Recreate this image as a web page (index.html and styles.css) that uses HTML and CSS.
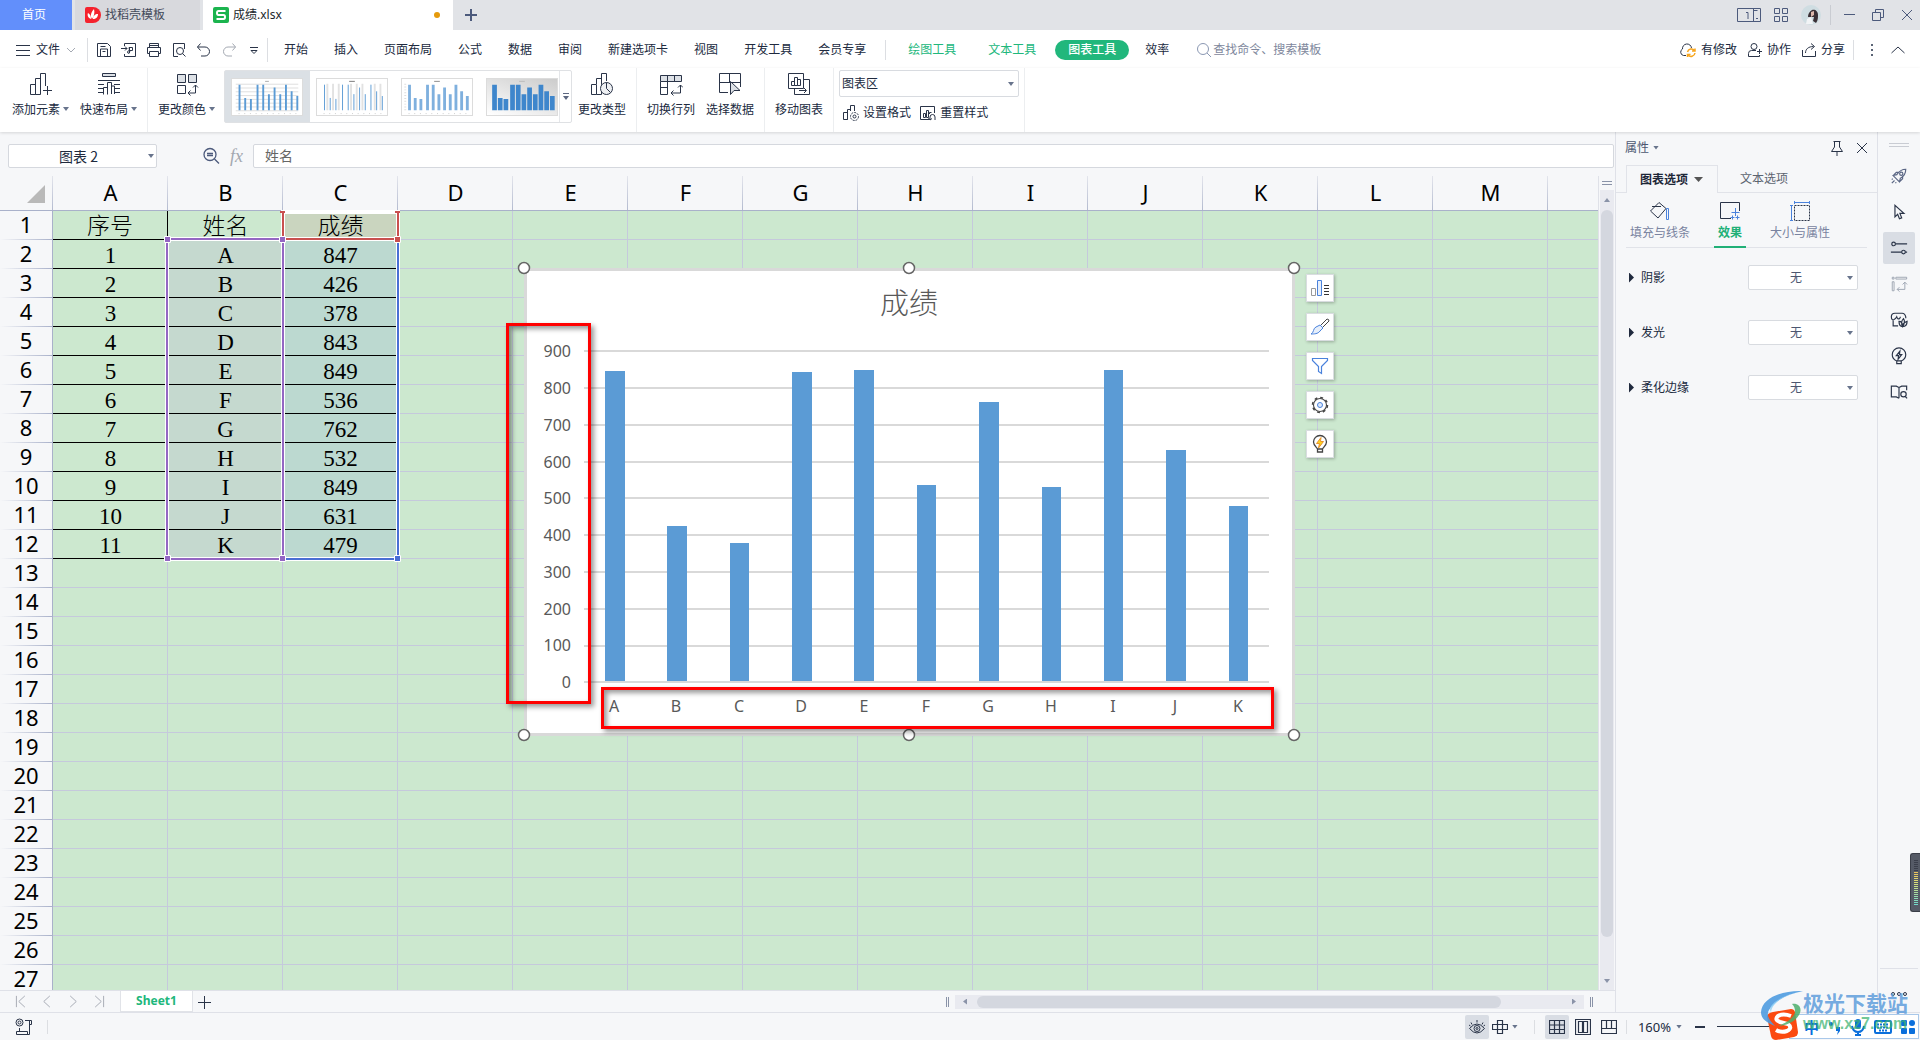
FILE: index.html
```html
<!DOCTYPE html>
<html lang="zh-CN">
<head>
<meta charset="utf-8">
<title>成绩.xlsx</title>
<link rel="stylesheet" href="styles.css">
</head>
<body>
<svg class="defs" aria-hidden="true">
  <symbol id="bars" viewBox="0 0 72 38">
    <path d="M7 33V6M13 33V20M19 33V21M26 33V6M32 33V6M38 33V16M44 33V9M50 33V16M56 33V6M62 33V13M68 33V18"/>
  </symbol>
</svg>

<header class="titlebar">
  <button class="home-tab">首页</button>
  <button class="doc-tab">
    <svg class="i16" viewBox="0 0 16 16"><path fill="#f5222d" d="M2 0h6a8 8 0 010 16H2a2 2 0 01-2-2V2a2 2 0 012-2z"/><path fill="#fff" d="M7 12C5 9 6 5 9 2c1 4 0 7-2 10zM6 12C3 11 2 8 3 6c2 1 3 3 3 6zM8 12c0-3 2-5 5-5 0 3-2 5-5 5z"/></svg>
    找稻壳模板
  </button>
  <button class="doc-tab active">
    <svg class="i16" viewBox="0 0 16 16"><rect width="16" height="16" rx="2" fill="#1bb44e"/><path fill="none" stroke="#fff" stroke-width="2" d="M12.500 4H5.500Q4 4 4 6t1.500 2h5Q12 8 12 10t-1.500 2H3.500"/></svg>
    <span class="doc-name">成绩.xlsx</span>
    <span class="dot"></span>
  </button>
  <button class="add-tab" aria-label="新建"><svg class="i16" viewBox="0 0 16 16"><path stroke="#4c5a7c" stroke-width="2" d="M8 2v12M2 8h12"/></svg></button>
  <div class="window-tools">
    <svg width="24" height="16" viewBox="0 0 24 16"><path class="ln" d="M.5 1.500h23v13h-23zM9 5.500h2V12M16.500 1.500v13M16.500 3.500h4M19 11.500h2"/></svg>
    <svg class="i16" viewBox="0 0 16 16"><path class="ln" d="M1.500 1.500h5v5h-5zM9.500 1.500h5v5h-5zM1.500 9.500h5v5h-5zM9.500 9.500h5v5h-5z"/></svg>
    <svg width="20" height="20" viewBox="0 0 20 20"><circle cx="10" cy="10" r="10" fill="#cfdde2"/><path fill="#3a3036" d="M11 5c3-1 6 1 6 5 0 3 0 5-2 8l-3-2 1-4-6 0c0-3 1-5 4-7z"/><path fill="#dcb7ab" d="M10 7l3-1 0 4-3 2z"/><path fill="#f2f4f6" d="M5 19l1-5 4-2 2 7z"/></svg>
    <span class="vsep"></span>
    <svg class="i16" viewBox="0 0 16 16"><path class="ln" d="M3 7.500h11"/></svg>
    <svg class="i16" viewBox="0 0 16 16"><path class="ln" d="M2.500 5.500h8v8h-8zM5.500 5V2.500h8v8H11"/></svg>
    <svg class="i16" viewBox="0 0 16 16"><path class="ln" d="M3 3l10 10M13 3L3 13"/></svg>
  </div>
</header>

<nav class="menubar">
  <button class="file-menu">
    <svg width="14" height="14" viewBox="0 0 14 14"><path class="dk" d="M0 2.500h14M0 7.500h14M0 12.500h14"/></svg>
    文件
    <svg class="chev" width="10" height="10" viewBox="0 0 10 10"><path class="gy" d="M1 3l4 4 4-4"/></svg>
  </button>
  <div class="quick">
    <svg class="i16" viewBox="0 0 16 16"><path class="dk" d="M1.500 1.500h10l3 3v10h-13zM4.500 14v-7h7v7M4.500 4.500h5M6.500 9.500h3"/></svg>
    <svg class="i16" viewBox="0 0 16 16"><path class="dk" d="M3.500 4V1.500h11v13h-11V12M0 6.500h6M4 4.500l2 2-2 2M8 5.500h3.500v3H8.500zM8.500 5v6q-2 1-2-1t3-1"/></svg>
    <svg class="i16" viewBox="0 0 16 16"><path class="dk" d="M3.500 5V1.500h9V5M3 11.500H1.500v-6h13v6H13M3.500 9.500h9v5h-9zM3.500 3.500h9"/></svg>
    <svg class="i16" viewBox="0 0 16 16"><path class="dk" d="M7 14.500H2.500v-13h11V7"/><circle class="dk" cx="9" cy="9" r="3.500"/><path class="dk" d="M11.500 11.500l3 3"/></svg>
    <svg class="i16" viewBox="0 0 16 16"><path class="dk" d="M4.500 1.500l-3 3.500 3 3.500M1.500 5H9a4.500 4.500 0 010 9H5"/></svg>
    <svg class="i16" viewBox="0 0 16 16"><path class="gy" d="M11.500 1.500l3 3.500-3 3.500M14.500 5H7a4.500 4.500 0 000 9h4"/></svg>
    <svg class="i16" viewBox="0 0 16 16"><path class="dk" d="M4 5.500h8M5 8.500l3 3 3-3z"/></svg>
  </div>
  <div class="tabs">
    <a href="#">开始</a><a href="#">插入</a><a href="#">页面布局</a><a href="#">公式</a><a href="#">数据</a><a href="#">审阅</a><a href="#">新建选项卡</a><a href="#">视图</a><a href="#">开发工具</a><a href="#">会员专享</a>
  </div>
  <div class="context-tabs">
    <a href="#" class="green">绘图工具</a><a href="#" class="green">文本工具</a><a href="#" class="pill">图表工具</a><a href="#" class="plain">效率</a>
  </div>
  <label class="search"><svg class="i16" viewBox="0 0 16 16"><circle class="bl" cx="7" cy="7" r="5.500"/><path class="bl" d="M11 11l4 4"/></svg><input type="text" placeholder="查找命令、搜索模板"></label>
  <div class="share">
    <button><svg width="18" height="16" viewBox="0 0 18 16"><path class="dk" d="M7 13.500H4.500a3.500 3.500 0 01-1-6.500 4.500 4.500 0 019-1"/><path fill="none" stroke="#f7a51c" stroke-width="1.500" d="M8.500 10a4 4 0 017-1.500M16 6.500v2.500h-3M16 11a4 4 0 01-7 2M8.500 15v-2.500h3"/></svg>有修改</button>
    <button><svg class="i16" viewBox="0 0 16 16"><circle class="dk" cx="7" cy="4.500" r="3"/><path class="dk" d="M9 8.500H4.500a3 3 0 00-3 3v3h11V13M10 9.500h5M12.500 7v5"/></svg>协作</button>
    <button><svg class="i16" viewBox="0 0 16 16"><path class="dk" d="M1.500 8v6.500h13V9M4.500 11c0-4 3-6.500 8-6.500M10 1.500l3.500 3-3.500 3"/></svg>分享</button>
    <span class="vsep"></span>
    <svg class="i16" viewBox="0 0 16 16"><path fill="#5a6475" d="M7 2h2v2H7zM7 7h2v2H7zM7 12h2v2H7z"/></svg>
    <svg class="i16" viewBox="0 0 16 16"><path class="dk" d="M1.500 11L8 5l6.500 6"/></svg>
  </div>
</nav>

<section class="ribbon">
  <div class="group">
    <button class="rb"><svg viewBox="0 0 24 24"><path class="dk" d="M1.500 22.500v-10h5v10zM6.500 22.500v-16h5v16zM11.500 14V1.500h5V14M18.500 14v9M14 18.500h9"/></svg><span class="more">添加元素</span></button>
    <button class="rb"><svg viewBox="0 0 24 24"><path class="dk" fill="#dde1e6" d="M5.500 1.500h13v3h-13z"/><path class="dk" d="M1 8.500h22M1 12.500h6M1 16.500h6M1 20.500h6M17 12.500h6M17 16.500h6M17 20.500h6M6.500 22.500v-7h4v7M10.500 22V10.500h4V22M14.500 22v-8h3v8"/></svg><span class="more">快速布局</span></button>
  </div>
  <div class="group">
    <button class="rb"><svg viewBox="0 0 24 24"><path class="dk" fill="#dde1e6" d="M2.500 2.500h8v8h-8zM13.500 2.500h8v8h-8z"/><path class="dk" d="M2.500 13.500h8v8h-8zM20.500 13v8H13M18 15.500l2.500-2.500 2.500 2.500M15.500 18.500L13 21l2.500 2.500"/></svg><span class="more">更改颜色</span></button>
  </div>
  <div class="gallery">
    <button class="style selected" aria-label="样式 1"><svg viewBox="0 0 72 38"><path stroke="#ddd" d="M3 5.500h66M3 9.500h66M3 13.500h66M3 17.500h66M3 21.500h66M3 25.500h66M3 29.500h66M3 33.500h66"/><path stroke="#aaa" d="M34 2.500h4"/><use href="#bars" class="b1"/><path stroke="#ccc" stroke-dasharray="1 5" d="M6 36.500h64"/></svg></button>
    <button class="style" aria-label="样式 2"><svg viewBox="0 0 72 38"><path stroke="#e2e2e2" stroke-width="2" d="M10 33V5M16 33V5M22 33V5M35 33V5M41 33V5M47 33V5M60 33V5M66 33V5"/><path stroke="#777" d="M33 2.500h6"/><use href="#bars" class="b2"/><path stroke="#ccc" stroke-dasharray="1 5" d="M6 36.500h64"/></svg></button>
    <button class="style" aria-label="样式 3"><svg viewBox="0 0 72 38"><path stroke="#888" d="M33 2.500h6"/><path stroke="#ddd" stroke-width="2" stroke-dasharray="1 2" d="M2.500 5v28"/><use href="#bars" class="b3"/><path stroke="#ccc" stroke-dasharray="1 5" d="M6 36.500h64"/></svg></button>
    <button class="style dark" aria-label="样式 4"><svg viewBox="0 0 72 38"><path stroke="#bbb" d="M33 2.500h6"/><use href="#bars" class="b4"/></svg></button>
    <button class="gallery-more" aria-label="更多样式"><svg width="8" height="8" viewBox="0 0 8 8"><path stroke="#5c6780" d="M1 .5h6"/><path fill="#5c6780" d="M1 3h6L4 7z"/></svg></button>
  </div>
  <div class="group tight">
    <button class="rb"><svg viewBox="0 0 24 24"><path class="dk" d="M1.500 22.500v-10h5v10zM6.500 12V6.500h5V22.500h-5M11.500 9V1.500h5V9"/><circle class="dk" fill="#eef0f3" cx="16.500" cy="16.500" r="6"/><path class="dk" d="M16.500 10.500v6l4 4"/></svg>更改类型</button>
  </div>
  <div class="group">
    <button class="rb"><svg viewBox="0 0 24 24"><path fill="#dde1e6" d="M2 3h20v6H2z"/><path class="dk" d="M1.500 3.500h21v6h-21zM1.500 9.500v13h7v-13M8.500 3.500v6M15.500 3.500v6M1.500 15.500h7M21.500 13v8H12M19 15.500l2.500-2.500 2.500 2.500M14.500 18.500L12 21l2.500 2.500"/></svg>切换行列</button>
    <button class="rb"><svg viewBox="0 0 24 24"><path class="dk" d="M10 20.500H1.500v-19h21V15M1.500 10.500h21M11.500 1.500v9"/><path class="dk" fill="#dde1e6" d="M12.500 9.500v13l3.500-4h6z"/></svg>选择数据</button>
  </div>
  <div class="group">
    <button class="rb"><svg viewBox="0 0 24 24"><path class="dk" d="M1.500 1.500h15v15h-15zM4.500 13.500v-4h3v4zM7.500 13.500v-8h3v8zM10.500 13.500v-6h3v6zM16.500 7.500h6v15h-15v-6M12 18.500h7M17 16l2.500 2.500L17 21"/></svg>移动图表</button>
  </div>
  <div class="group area">
    <select aria-label="图表元素"><option>图表区</option></select>
    <div class="area-buttons">
      <button><svg class="i16" viewBox="0 0 16 16"><path class="dk" d="M.5 14.500v-7h4v7zM4.500 14.500v-10h3M7.500 6V.5h4V6"/><circle class="dk" stroke-dasharray="2 1" cx="11.500" cy="11.500" r="4"/><circle class="dk" cx="11.500" cy="11.500" r="1.500"/></svg>设置格式</button>
      <button><svg class="i16" viewBox="0 0 16 16"><path class="dk" d="M9 14.500H.5v-13h14V8M3.500 12.500v-4h2v4zM6.500 12.500v-7h2v7zM9.500 9V7.500h2M10 15v-3a2.500 2.500 0 015 0v3M8.500 13l1.500 2 2-1.500"/></svg>重置样式</button>
    </div>
  </div>
</section>

<main class="main">
  <section class="workspace">
    <div class="formula-bar">
      <div class="name-box"><input type="text" value="图表 2" aria-label="名称框"><span class="caret"></span></div>
      <svg class="zoom-ic" width="18" height="18" viewBox="0 0 18 18"><circle class="ln2" cx="8" cy="7.500" r="6"/><path class="ln2" d="M5 6.500h6M5 8.500h6M12.500 12l4.500 4.500"/></svg>
      <span class="fx">fx</span>
      <input class="formula" type="text" value="姓名" aria-label="编辑栏">
    </div>
    <div class="sheet-area">
      <div class="pane">
        <table class="sheet">
          <thead><tr><th class="corner"><span></span></th><th>A</th><th>B</th><th>C</th><th>D</th><th>E</th><th>F</th><th>G</th><th>H</th><th>I</th><th>J</th><th>K</th><th>L</th><th>M</th><th></th></tr></thead>
          <tbody>
            <tr class="data head"><th>1</th><td>序号</td><td>姓名</td><td>成绩</td><td colspan="11" class="rest"></td></tr>
            <tr class="data"><th>2</th><td>1</td><td>A</td><td>847</td><td colspan="11" class="rest"></td></tr>
            <tr class="data"><th>3</th><td>2</td><td>B</td><td>426</td><td colspan="11" class="rest"></td></tr>
            <tr class="data"><th>4</th><td>3</td><td>C</td><td>378</td><td colspan="11" class="rest"></td></tr>
            <tr class="data"><th>5</th><td>4</td><td>D</td><td>843</td><td colspan="11" class="rest"></td></tr>
            <tr class="data"><th>6</th><td>5</td><td>E</td><td>849</td><td colspan="11" class="rest"></td></tr>
            <tr class="data"><th>7</th><td>6</td><td>F</td><td>536</td><td colspan="11" class="rest"></td></tr>
            <tr class="data"><th>8</th><td>7</td><td>G</td><td>762</td><td colspan="11" class="rest"></td></tr>
            <tr class="data"><th>9</th><td>8</td><td>H</td><td>532</td><td colspan="11" class="rest"></td></tr>
            <tr class="data"><th>10</th><td>9</td><td>I</td><td>849</td><td colspan="11" class="rest"></td></tr>
            <tr class="data"><th>11</th><td>10</td><td>J</td><td>631</td><td colspan="11" class="rest"></td></tr>
            <tr class="data"><th>12</th><td>11</td><td>K</td><td>479</td><td colspan="11" class="rest"></td></tr>
            <tr><th>13</th><td colspan="14" class="rest"></td></tr>
            <tr><th>14</th><td colspan="14" class="rest"></td></tr>
            <tr><th>15</th><td colspan="14" class="rest"></td></tr>
            <tr><th>16</th><td colspan="14" class="rest"></td></tr>
            <tr><th>17</th><td colspan="14" class="rest"></td></tr>
            <tr><th>18</th><td colspan="14" class="rest"></td></tr>
            <tr><th>19</th><td colspan="14" class="rest"></td></tr>
            <tr><th>20</th><td colspan="14" class="rest"></td></tr>
            <tr><th>21</th><td colspan="14" class="rest"></td></tr>
            <tr><th>22</th><td colspan="14" class="rest"></td></tr>
            <tr><th>23</th><td colspan="14" class="rest"></td></tr>
            <tr><th>24</th><td colspan="14" class="rest"></td></tr>
            <tr><th>25</th><td colspan="14" class="rest"></td></tr>
            <tr><th>26</th><td colspan="14" class="rest"></td></tr>
            <tr><th>27</th><td colspan="14" class="rest"></td></tr>
          </tbody>
        </table>

        <!-- Source ranges of the selected chart -->
        <svg class="ranges" width="404" height="400" viewBox="0 176 404 400" aria-hidden="true">
          <g fill="none" stroke="#fff" stroke-width="4"><path d="M398 240v319H283M283 212h115v27H283z"/><path d="M167 239h116v320H167z"/></g>
          <g fill="none" stroke-width="2"><path stroke="#4a6fd4" d="M398 240v319H283"/><path stroke="#c9504f" d="M283 213v26h115v-26"/><path stroke="#9467c3" d="M283 239H167v320h116V240"/></g>
          <g stroke="#fff"><path fill="#9467c3" d="M164.500 236.500h6v6h-6zM279.500 236.500h6v6h-6zM164.500 555.500h6v6h-6zM279.500 555.500h6v6h-6z"/><path fill="#4a6fd4" d="M394.500 555.500h6v6h-6z"/><path fill="#c9504f" d="M394.500 236.500h6v6h-6z"/></g>
          <path fill="#c9504f" d="M280 211h5v2h-5zM395 211h5v2h-5z"/>
        </svg>

        <svg class="chart" width="790" height="490" viewBox="515 258 790 490" role="img" aria-label="成绩">
          <rect x="524" y="268" width="771" height="468" fill="#d9d9d9"/>
          <rect x="527" y="271" width="765" height="462" fill="#fff"/>
          <text class="chart-title" x="909" y="314">成绩</text>
          <path stroke="#d9d9d9" stroke-width="2" d="M584 351h685M584 388h685M584 425h685M584 462h685M584 498h685M584 535h685M584 572h685M584 609h685M584 646h685M584 682h685"/>
          <path fill="#5b9bd5" d="M605 371h20v310h-20zM667 526h20v155h-20zM730 543h19v138h-19zM792 372h20v309h-20zM854 370h20v311h-20zM917 485h19v196h-19zM979 402h20v279h-20zM1042 487h19v194h-19zM1104 370h19v311h-19zM1166 450h20v231h-20zM1229 506h19v175h-19z"/>
          <g class="axis-y"><text x="571" y="357">900</text><text x="571" y="394">800</text><text x="571" y="431">700</text><text x="571" y="468">600</text><text x="571" y="504">500</text><text x="571" y="541">400</text><text x="571" y="578">300</text><text x="571" y="615">200</text><text x="571" y="651">100</text><text x="571" y="688">0</text></g>
          <g class="axis-x"><text x="614" y="712">A</text><text x="676" y="712">B</text><text x="739" y="712">C</text><text x="801" y="712">D</text><text x="864" y="712">E</text><text x="926" y="712">F</text><text x="988" y="712">G</text><text x="1051" y="712">H</text><text x="1113" y="712">I</text><text x="1175" y="712">J</text><text x="1238" y="712">K</text></g>
          <g fill="#fff" stroke="#666" stroke-width="1.500"><circle cx="524" cy="268" r="5.500"/><circle cx="909" cy="268" r="5.500"/><circle cx="1294" cy="268" r="5.500"/><circle cx="524" cy="735" r="5.500"/><circle cx="909" cy="735" r="5.500"/><circle cx="1294" cy="735" r="5.500"/></g>
        </svg>
        <div class="mark mark-y"></div>
        <div class="mark mark-x"></div>

        <div class="chart-tools">
          <button aria-label="图表元素"><svg viewBox="0 0 20 20"><path fill="none" stroke="#999" d="M1.500 10.500h4v7h-4z"/><path fill="#e6effb" stroke="#4a82dc" d="M7.500 2.500h4v15h-4z"/><path stroke="#333" d="M14 7.500h5M14 10.500h5M14 13.500h5M14 16.500h5"/></svg></button>
          <button aria-label="图表样式"><svg viewBox="0 0 20 20"><path fill="none" stroke="#444" d="M11 8l6-6q2 0 2 2l-7 7"/><path fill="#e6effb" stroke="#4a82dc" d="M10 8l3 3-3 3c-2 3-6 3-9 3 3-1 2-6 5-7z"/></svg></button>
          <button aria-label="图表筛选器"><svg viewBox="0 0 20 20"><path fill="none" stroke="#4a82dc" stroke-width="1.200" d="M2.500 2.500h15v2l-6 6v7l-3-2v-5l-6-6z"/></svg></button>
          <button aria-label="设置图表区域格式"><svg viewBox="0 0 20 20"><circle cx="10" cy="10" r="6.500" fill="none" stroke="#444" stroke-width="1.100"/><circle cx="10" cy="10" r="7.500" fill="none" stroke="#444" stroke-width="1.500" stroke-dasharray="2.900 2.990"/><circle cx="10" cy="10" r="2.500" fill="#dfeafa" stroke="#4a82dc"/></svg></button>
          <button aria-label="智能图表"><svg viewBox="0 0 20 20"><path fill="none" stroke="#444" stroke-width="1.300" d="M7.500 15c0-1-4-3-4-7a6.500 6.500 0 0113 0c0 4-4 6-4 7zM7.500 15v3h5v-3"/><path fill="#ffd41f" stroke="#e8942a" d="M11 3.500L6.500 9.500h3l-1 4.500 5-6.500h-3z"/></svg></button>
        </div>
      </div>
      <div class="vscroll">
        <span class="split"></span>
        <div class="vtrack"><span class="arrow up"></span><span class="vthumb"></span><span class="arrow down"></span></div>
      </div>
    </div>
    <div class="sheet-bar">
      <div class="sheet-nav">
        <svg class="i16" viewBox="0 0 16 16"><path class="gy" d="M1.500 2v12M10.500 2L4 8l6.500 6"/></svg>
        <svg class="i16" viewBox="0 0 16 16"><path class="gy" d="M10.500 2L4 8l6.500 6"/></svg>
        <svg class="i16" viewBox="0 0 16 16"><path class="gy" d="M5.500 2L12 8l-6.500 6"/></svg>
        <svg class="i16" viewBox="0 0 16 16"><path class="gy" d="M14.500 2v12M5.500 2L12 8l-6.500 6"/></svg>
      </div>
      <button class="sheet-tab">Sheet1</button>
      <button class="add-sheet" aria-label="新建工作表"><svg class="i16" viewBox="0 0 16 16"><path class="dk" d="M8.500 2v13M2 8.500h13"/></svg></button>
      <div class="hscroll">
        <span class="vsplit"></span>
        <div class="htrack"><span class="arrow left"></span><span class="hthumb"></span><span class="arrow right"></span></div>
        <span class="vsplit"></span>
      </div>
    </div>
  </section>

  <aside class="props">
    <div class="props-head"><button>属性<span class="caret"></span></button><span class="grow"></span>
      <svg class="i16" viewBox="0 0 16 16"><path class="dk" d="M4.500 1.500h7M5.500 1.500V7L2.500 11.500h11L10.500 7V1.500M8 11.500V16"/></svg>
      <svg class="i16" viewBox="0 0 16 16"><path class="dk" d="M3 3l10 10M13 3L3 13"/></svg>
    </div>
    <div class="props-tabs"><button class="on">图表选项<span class="caret big"></span></button><button>文本选项</button></div>
    <div class="props-kinds">
      <button><svg width="22" height="22" viewBox="0 0 22 22"><path class="dk" d="M1.500 11L10 2.500l7 6-8 9.500zM3 6.500h9"/><path stroke="#4a82dc" fill="none" d="M17.500 8.500h2v11h-2z"/></svg>填充与线条</button>
      <button class="on"><svg width="22" height="22" viewBox="0 0 22 22"><path class="dk" d="M12 18.500H1.500v-16h19V11"/><path stroke="#4a82dc" d="M16.500 8v8M12.500 12.500h8M13.500 15.500v4M11.500 17.500h4M18.500 15.500v4M16.500 17.500h4"/></svg>效果</button>
      <button><svg width="22" height="22" viewBox="0 0 22 22"><path class="dk" stroke-dasharray="2 1" d="M5.500 5.500h15v15h-15z"/><path stroke="#4a82dc" d="M5 2.500h16M5.500 1v3M20.500 1v3M2.500 5v16M1 5.500h3M1 20.500h3"/></svg>大小与属性</button>
    </div>
    <div class="prop"><label for="p1">阴影</label><select id="p1"><option>无</option></select></div>
    <div class="prop"><label for="p2">发光</label><select id="p2"><option>无</option></select></div>
    <div class="prop"><label for="p3">柔化边缘</label><select id="p3"><option>无</option></select></div>
  </aside>

  <aside class="rail">
    <span class="grip"></span>
    <button aria-label="快速工具"><svg viewBox="0 0 20 20"><path class="sl" d="M17.500 2.500c-5 0-8 3-10 6l-4 1 7 7 1-4c4-2 6-5 6-10zM3 13l-1 1M5 15l-3 3M7 17l-1 1M3.500 9.500L7 6h3M10.500 16.500L14 13v-3"/><circle class="sl" cx="12.500" cy="7.500" r="1.800"/></svg></button>
    <button aria-label="选择"><svg viewBox="0 0 20 20"><path class="dk w" d="M5.500 2.500v13l3-3 2 5 2.500-1-2-5h4.500z"/></svg></button>
    <button aria-label="属性" class="on"><svg viewBox="0 0 20 20"><path class="dk w" d="M6 5.500h13M1 14.500h12M17 14.500h2"/><circle class="dk w" cx="4" cy="5.500" r="2"/><circle class="dk w" cx="15" cy="14.500" r="2"/></svg></button>
    <button aria-label="数据透视表"><svg viewBox="0 0 20 20"><path fill="none" stroke="#98a0ae" d="M2.500 2.500h2v2h-2zM6.500 2.500h12v2h-12zM2.500 7.500h2v10h-2zM16.500 8v8H8M14 10.500L16.500 8l2.500 2.500M10.500 13.500L8 16l2.500 2.500"/></svg></button>
    <button aria-label="素材"><svg viewBox="0 0 20 20"><path class="dk w" d="M9 16.500H3.500v-6M17.500 8V6.500q-1-4-4-4h-8q-4 0-4 4t3 3q2-1 3-3 1 3 3 2 1-1 1-2"/><path class="dk w" d="M14 17.500c-3 0-4-3-4-6 2 0 4 2 4 6zM14 17.500c-2-4-1-7 1-9 2 3 1 6-1 9zM14 17.500c0-4 2-5 5-6 0 3-1 6-5 6z"/></svg></button>
    <button aria-label="灵感"><svg viewBox="0 0 20 20"><path class="dk w" d="M7.500 15.500c-2-1-5-3-5-7a7.500 7.500 0 0115 0c0 4-3 6-5 7v3h-5zM7.500 15.500h5M11 4.500L7 9.500h2.500l-.5 4L13 8.500h-2.500z"/></svg></button>
    <button aria-label="帮助"><svg viewBox="0 0 20 20"><path class="dk w" d="M10 17l-3-1.500H1.500v-12H7l3 1.500V17M10 5l3-1.500h5.500V8"/><circle class="dk w" cx="15" cy="12.500" r="3"/><path class="dk w" d="M17 15l2 2"/></svg></button>
    <span class="grow"></span>
    <span class="rail-end"><svg width="18" height="6" viewBox="0 0 18 6"><circle class="dk" cx="3" cy="3" r="1.500"/><circle class="dk" cx="9" cy="3" r="1.500"/><circle class="dk" cx="15" cy="3" r="1.500"/></svg></span>
  </aside>
</main>

<footer class="statusbar">
  <svg class="macro" width="18" height="18" viewBox="0 0 18 18"><circle class="dk" cx="4.500" cy="4.500" r="3.500"/><circle class="dk" cx="4.500" cy="4.500" r="1.500"/><path class="dk" d="M10 2.500h6.500v4h-2V2.500M14.500 6v10.500h-13v-3h11v3M4.500 13v-3"/></svg>
  <span class="vsep"></span>
  <span class="grow"></span>
  <button class="st on" aria-label="护眼模式"><svg width="18" height="18" viewBox="0 0 18 18"><path class="dk" d="M1.500 10.500q7.500-9 15 0-7.500 9-15 0zM3 4.500l1 2M9 2v2.500M15 4.500l-1 2M1 7l1.500 1M17 7l-1.500 1"/><circle class="dk" cx="9" cy="10.500" r="3"/><circle class="dk" cx="9" cy="10.500" r="1"/></svg></button>
  <button class="st cross" aria-label="阅读模式"><svg width="16" height="16" viewBox="0 0 16 16"><path class="dk t" d="M5.500 1.500h5v13h-5zM.5 5.500h15v5H.5z"/></svg><span class="caret"></span></button>
  <span class="vsep"></span>
  <button class="st on" aria-label="普通视图"><svg width="16" height="16" viewBox="0 0 16 16"><path class="dk t" d="M.5 1.500h15v13H.5zM.5 6h15M.5 10.500h15M5.500 1.500v13M10.500 1.500v13"/></svg></button>
  <button class="st" aria-label="分页预览"><svg width="16" height="16" viewBox="0 0 16 16"><path class="dk t" d="M.5.5h15v15H.5zM3.500 2.500h4v11h-4zM8.500 2.500h4v11h-4z"/></svg></button>
  <button class="st" aria-label="页面布局"><svg width="16" height="16" viewBox="0 0 16 16"><path class="dk t" d="M.5 1.500h15v13H.5zM5.500 1.500v8M10.500 1.500v8M.5 9.500h15"/></svg></button>
  <span class="vsep"></span>
  <button class="zoom">160%<span class="caret"></span></button>
  <span class="minus"></span>
  <input class="slider" type="range" min="10" max="400" value="160" aria-label="缩放">
</footer>

<div class="meter" aria-hidden="true"></div>

<div class="overlay-brand">
  <div class="ime">
    <span class="ime-cn">中</span>
    <svg width="14" height="18" viewBox="0 0 14 18"><circle cx="3" cy="6" r="2" fill="#0a6fdc"/><path fill="#0a6fdc" d="M8 9h4v4l-3 4 1-4H8z"/></svg>
    <svg width="14" height="18" viewBox="0 0 14 18"><rect x="4" y="1" width="6" height="10" rx="3" fill="#0a6fdc"/><path fill="none" stroke="#0a6fdc" stroke-width="2" d="M1 8q1 6 6 6t6-6M7 14v3M4 17h6"/></svg>
    <svg width="18" height="14" viewBox="0 0 18 14"><rect x="1" y="1" width="16" height="12" rx="1" fill="none" stroke="#0a6fdc" stroke-width="2"/><path stroke="#0a6fdc" stroke-width="2" stroke-dasharray="2 1" d="M3 4.500h12M3 7.500h12M5 10.500h8"/></svg>
    <svg width="14" height="14" viewBox="0 0 14 14"><g fill="#0a6fdc"><rect width="6" height="6" rx="1"/><circle cx="11" cy="3" r="3"/><rect y="8" width="6" height="6" rx="1"/><rect x="8" y="8" width="6" height="6" rx="1"/></g></svg>
  </div>
  <svg class="brand-logo" width="44" height="50" viewBox="0 0 44 50"><path fill="#fb4a10" d="M13 22l18-3q3 0 4 3l3 20q0 4-4 5l-18 3q-4 0-5-4L7 27q0-4 6-5z"/><path fill="none" stroke="#fff" stroke-width="4" d="M31 26q-8-3-13 0-4 4 2 6l8 2q5 4-1 7-6 2-11-1"/><path fill="#4f9be0" opacity=".9" d="M43 1C22 0 2 8 1 22c0 7 6 11 14 14C9 30 6 25 9 20 15 10 28 4 43 1z"/><path fill="#8fd0f5" opacity=".8" d="M40 2C24 5 12 13 11 22 6 15 22 5 40 2z"/><path fill="#4cae6b" opacity=".85" d="M32 14c6-1 10 3 8 9-3 8-14 13-22 13 8-3 16-8 17-14 0-4-1-6-3-8z"/></svg>
  <span class="brand-name">极光下载站</span>
  <span class="brand-url">www.xz7.com</span>
</div>
</body>
</html>
```
FILE: styles.css
```css
* { box-sizing: border-box; }
body {
  margin: 0;
  height: 100vh;
  display: flex;
  flex-direction: column;
  position: relative;
  overflow: hidden;
  background: #f6f7f9;
  color: #202a3e;
  font: 12px/16px "Noto Sans", "Noto Sans CJK SC", sans-serif;
}
button, input, select { font: inherit; color: inherit; border: 0; margin: 0; padding: 0; background: none; border-radius: 0; }
button { white-space: nowrap; }
a { color: inherit; text-decoration: none; white-space: nowrap; }
svg { display: block; flex: none; }
.defs { position: absolute; width: 0; height: 0; }
.i16 { width: 16px; height: 16px; }
.grow { flex: 1; }
.ln, .ln2, .gy, .bl, .sl { fill: none; }
.dk { stroke: #2a3448; }
.dk:not([fill]) { fill: none; }
.ln { stroke: #4c5a7c; }
.ln2 { stroke: #4c5a7c; stroke-width: 1.3; }
.gy { stroke: #a4a9b2; }
.bl { stroke: #8b98b3; }
.sl { stroke: #5a6684; stroke-width: 1.3; }
.w { stroke-width: 1.3; }
.vsep { width: 1px; height: 20px; background: #dcdee2; flex: none; }
.caret { display: block; width: 6px; height: 4px; background: #68748c; clip-path: polygon(0 0, 100% 0, 50% 100%); flex: none; }
.caret.big { width: 9px; height: 5px; background: #555; }
select {
  appearance: none;
  background: #fff url("data:image/svg+xml,%3Csvg xmlns='http://www.w3.org/2000/svg' width='6' height='4'%3E%3Cpath fill='%2368748c' d='M0 0h6L3 4z'/%3E%3C/svg%3E") no-repeat right 4px center;
  border: 1px solid #d8dbe0;
  border-radius: 2px;
}

/* Title bar */
.titlebar { height: 30px; background: #e1e3e7; display: flex; flex: none; }
.home-tab { width: 72px; background: #628ffb; color: #fff; padding-right: 4px; }
.doc-tab { display: flex; align-items: center; gap: 4px; width: 125px; margin-left: 3px; padding: 0 10px; background: #d8d9dd; color: #434a5a; }
.doc-tab.active { width: 250px; background: #fff; color: #1a1f2b; }
.doc-name { flex: 1; text-align: left; }
.dot { width: 6px; height: 6px; border-radius: 3px; background: #e59a0c; margin-right: 3px; }
.add-tab { width: 36px; display: flex; align-items: center; justify-content: center; }
.window-tools { margin-left: auto; display: flex; align-items: center; gap: 12px; padding-right: 5px; }
.window-tools .i16 + .i16 { margin-left: 1px; }
.window-tools .vsep { margin: 0 -2px 0 -3px; background: #c9ccd2; }

/* Menu bar */
.menubar { height: 38px; background: #fff; display: flex; align-items: center; flex: none; padding: 1px 0 0 16px; }
.file-menu { display: flex; align-items: center; gap: 6px; width: 72px; border-right: 1px solid #dcdee2; height: 24px; }
.quick { display: flex; gap: 9px; padding: 4px 5px 4px 8px; border-right: 1px solid #dcdee2; }
.tabs { display: flex; gap: 26px; padding: 2px 19px 2px 16px; border-right: 1px solid #dcdee2; }
.context-tabs { display: flex; align-items: center; padding-left: 22px; }
.green { color: #21b77c; margin-right: 32px; }
.green + .green { margin-right: 19px; }
.pill { background: #21b77c; color: #fff; font-weight: 500; border-radius: 10px; padding: 2px 13px; margin-right: 16px; }
.plain { margin-right: 27px; }
.search { display: flex; align-items: center; gap: 1px; flex: 1; }
.search input { width: 140px; }
.search input::placeholder { color: #7e879c; opacity: 1; }
.share { display: flex; align-items: center; gap: 10px; padding-right: 14px; }
.share button { display: flex; align-items: center; gap: 4px; }
.share .vsep { margin-left: -2px; }

/* Ribbon */
.ribbon { height: 64px; background: #fff; display: flex; flex: none; box-shadow: 0 1px 3px #0002; position: relative; padding-left: 2px; }
.group { display: flex; gap: 11px; padding: 0 10px; border-right: 1px solid #eceef0; }
.group:nth-child(2) { border-right: 0; padding-right: 9px; }
.group.tight { padding: 0 10px 0 6px; }
.rb { display: flex; flex-direction: column; align-items: center; gap: 6px; padding: 4px 0 14px; }
.rb svg { width: 24px; height: 24px; }
.more::after { content: ""; display: inline-block; width: 6px; height: 4px; margin: 0 0 3px 3px; background: #68748c; clip-path: polygon(0 0, 100% 0, 50% 100%); }
.gallery { display: flex; height: 53px; margin-top: 2px; border: 1px solid #dfe1e4; border-radius: 2px; }
.style { width: 85px; padding: 6px; display: flex; align-items: center; }
.style.selected { background: #dbe0e5; }
.style svg { width: 72px; height: 38px; background: #fff; border: 1px solid #dcdcdc; }
.style.dark { width: 79px; padding-right: 0; }
.style.dark svg { background: linear-gradient(200deg, #ccc, #fff); }
.b1, .b2, .b3, .b4 { stroke: #5b9bd5; }
.b1 { stroke-width: 2; }
.b2 { stroke-width: 1; }
.b3 { stroke-width: 3; stroke: #7fb0de; }
.b4 { stroke-width: 5; stroke: #3e86cc; }
.gallery-more { width: 12px; border-left: 1px solid #e4e6e9; display: flex; align-items: center; justify-content: center; }
.group.area { flex-direction: column; gap: 8px; padding: 2px 5px; width: 191px; }
.area select { height: 27px; padding-left: 2px; }
.area-buttons { display: flex; gap: 9px; padding-left: 4px; }
.area-buttons button { display: flex; align-items: center; gap: 4px; }

/* Workspace */
.main { flex: 1; display: flex; min-height: 0; }
.workspace { flex: 1; min-width: 0; display: flex; flex-direction: column; }
.formula-bar { height: 44px; flex: none; display: flex; align-items: center; padding: 4px 1px 0 8px; font-size: 14px; }
.name-box { width: 149px; height: 24px; display: flex; align-items: center; background: #fff; border: 1px solid #d5d8de; border-radius: 2px; padding-right: 2px; }
.name-box input { flex: 1; min-width: 0; text-align: center; font-family: "Noto Sans CJK SC", sans-serif; }
.zoom-ic { margin-left: 45px; }
.fx { width: 33px; padding-left: 10px; font: italic 18px/20px "Liberation Serif", serif; color: #a3a8b0; }
.formula { flex: 1; height: 24px; background: #fff; border: 1px solid #d5d8de; border-radius: 2px; padding: 0 11px 2px; color: #666; }
.sheet-area { flex: 1; display: flex; min-height: 0; }
.pane { flex: 1; min-width: 0; position: relative; overflow: hidden; background: #cce8cf; border-right: 1px solid #dfe1e8; }
.sheet { table-layout: fixed; width: 1663px; border-collapse: separate; border-spacing: 0; font-size: 22px; color: #000; }
.sheet th, .sheet td { padding: 0; font-weight: 400; text-align: center; overflow: hidden; }
.sheet th { background: #f6f7f9; }
.sheet thead th { width: 115px; height: 35px; line-height: 32px; padding-bottom: 2px; border-bottom: 1px solid #a9b1ca; background: linear-gradient(#e3e5ec, #b4bbd0) no-repeat right / 1px 100% #f6f7f9; }
.sheet thead .corner { width: 53px; }
.corner span { display: block; width: 18px; height: 18px; margin: 4px 8px 0 auto; background: #b9b9b9; clip-path: polygon(100% 0, 100% 100%, 0 100%); }
.sheet tbody th { height: 29px; line-height: 26px; padding-bottom: 3px; border-right: 1px solid #a9b1ca; background: linear-gradient(90deg, #f6f7f9, #a9b1ca) no-repeat bottom / 100% 1px #f6f7f9; }
.sheet td { height: 29px; line-height: 24px; padding-top: 4px; font-size: 23px; font-family: "Liberation Serif", "Noto Sans CJK SC", serif; border-bottom: 1px solid #000; }
.sheet .head td { font-weight: 300; }
.head td:nth-child(2) { border-right: 1px solid #000; }
.data:not(.head) td:nth-child(3) { background: #c5d9cf; }
.data:not(.head) td:nth-child(4) { background: #bcd9d0; }
.head td:nth-child(4) { background: #cad5bf; }
.sheet td.rest { border-bottom: 1px solid #c5c9dc; background: repeating-linear-gradient(90deg, transparent 0 114px, #c5c9dc 114px 115px); }

.ranges, .chart, .mark, .chart-tools { position: absolute; }
.ranges { left: 0; top: 0; }
.chart { left: 515px; top: 82px; }
.chart-title { font: 300 29px "Noto Sans CJK SC", sans-serif; text-anchor: middle; fill: #595959; }
.axis-y, .axis-x { font: 16px "Noto Sans", sans-serif; fill: #595959; }
.axis-y { text-anchor: end; }
.axis-x { text-anchor: middle; }
.mark { border: 3px solid #f00; box-shadow: 3px 3px 5px #0006, inset 3px 3px 5px #0006; }
.mark-y { left: 506px; top: 147px; width: 85px; height: 381px; }
.mark-x { left: 601px; top: 511px; width: 673px; height: 42px; }
.chart-tools { left: 1306px; top: 98px; display: flex; flex-direction: column; gap: 11px; }
.chart-tools button { width: 28px; height: 28px; padding: 3px; background: #fff; border: 1px solid #d9dde0; box-shadow: 1px 1px 3px #0004; }
.chart-tools svg { width: 20px; height: 20px; }

.vscroll { width: 16px; display: flex; flex-direction: column; align-items: center; flex: none; }
.split { width: 10px; height: 4px; margin: 5px 0; border: solid #8a93a8; border-width: 1px 0; }
.vtrack { flex: 1; width: 14px; background: #e9eaf0; display: flex; flex-direction: column; align-items: center; }
.vthumb { flex: 1; width: 12px; margin: 8px 0 42px; background: #d4d7df; border-radius: 6px; }
.arrow { flex: none; background: #8a93a8; }
.up { width: 6px; height: 4px; margin-top: 8px; clip-path: polygon(50% 0, 100% 100%, 0 100%); }
.down { width: 6px; height: 4px; margin-bottom: 7px; clip-path: polygon(0 0, 100% 0, 50% 100%); }
.left { width: 4px; height: 6px; clip-path: polygon(100% 0, 100% 100%, 0 50%); }
.right { width: 4px; height: 6px; clip-path: polygon(0 0, 100% 50%, 0 100%); }

.sheet-bar { height: 22px; flex: none; display: flex; align-items: center; border-top: 1px solid #dfe1e8; }
.sheet-nav { display: flex; gap: 10px; padding: 0 17px 0 15px; width: 120px; }
.sheet-nav svg { width: 15px; height: 15px; }
.sheet-tab { width: 73px; height: 21px; background: #fff; color: #21b77c; font-weight: 700; border: solid #e1e3e8; border-width: 0 1px 1px; }
.add-sheet { margin-left: 3px; }
.hscroll { margin-left: auto; display: flex; align-items: center; gap: 6px; width: 669px; padding-right: 22px; }
.vsplit { width: 3px; height: 10px; border: solid #8a93a8; border-width: 0 1px; }
.htrack { flex: 1; height: 14px; background: #e9eaf0; display: flex; align-items: center; padding: 0 8px; }
.hthumb { flex: 1; height: 12px; margin: 0 71px 0 10px; background: #d4d7df; border-radius: 6px; }

/* Properties panel */
.props { width: 262px; flex: none; border-left: 1px solid #dfe1e8; padding: 7px 10px 0; }
.props-head { display: flex; align-items: center; gap: 9px; height: 17px; margin: 0 -3px 0 -1px; }
.props-head button { display: flex; align-items: center; gap: 4px; color: #4c5670; }
.props-tabs { display: flex; height: 28px; margin: 9px -10px 0; padding-left: 10px; box-shadow: inset 0 -1px #e1e3e9; }
.props-tabs button { width: 92px; display: flex; align-items: center; gap: 6px; padding-left: 14px; color: #5c6470; }
.props-tabs .on { padding-left: 13px; background: #f6f7f9; border: solid #e1e3e9; border-width: 1px 1px 0; color: #1e2738; font-weight: 700; }
.props-tabs button + button { padding-left: 22px; }
.props-kinds { display: flex; justify-content: space-between; padding: 0 37px 0 4px; border-bottom: 1px solid #e1e3e9; height: 55px; margin: 0 0 2px; }
.props-kinds button { display: flex; flex-direction: column; align-items: center; gap: 3px; padding: 7px 0 5px; color: #7983a0; height: 55px; }
.props-kinds .on { color: #21b077; font-weight: 700; border-bottom: 2px solid #21b077; padding: 7px 4px 3px; }
.prop { display: flex; align-items: center; height: 55px; padding: 0 9px 0 3px; }
.prop label { flex: 1; display: flex; align-items: center; gap: 7px; }
.prop label::before { content: ""; width: 5px; height: 10px; background: #202a3e; clip-path: polygon(0 0, 100% 50%, 0 100%); }
.prop select { width: 110px; height: 25px; text-align: center; padding-right: 14px; color: #4c5670; }

/* Right rail */
.rail { width: 43px; flex: none; border-left: 1px solid #dfe1e8; display: flex; flex-direction: column; align-items: center; gap: 4px; padding-right: 1px; }
.grip { width: 20px; height: 4px; margin: 11px 0 9px; border: solid #c9ccd3; border-width: 1px 0; }
.rail button { width: 32px; height: 32px; padding: 7px; border-radius: 2px; }
.rail button svg { width: 18px; height: 18px; }
.rail .on { background: #d9dde4; }
.rail-end { height: 44px; width: 38px; border-top: 1px solid #dfe1e8; display: flex; justify-content: center; padding-top: 22px; }

/* Status bar */
.statusbar { height: 28px; flex: none; display: flex; align-items: center; border-top: 1px solid #dfe1e8; padding-left: 15px; }
.statusbar .vsep { height: 14px; }
.macro { margin-right: 14px; }
.st { width: 24px; height: 24px; display: flex; align-items: center; justify-content: center; margin-right: 2px; border-radius: 2px; }
.st.on { background: #d9dde4; }
.cross { width: 28px; gap: 4px; margin-right: 12px; }
.cross + .vsep { margin-right: 10px; }
.st + .vsep { margin-left: 3px; }
.zoom { display: flex; align-items: center; gap: 5px; font-size: 13px; margin: 0 13px 0 11px; }
.t { stroke-width: 1.2; }
.minus { width: 10px; height: 2px; background: #2a3448; margin-right: 12px; }
.slider { appearance: none; width: 110px; height: 1px; background: #2a3448; margin-right: 93px; }
.slider::-webkit-slider-thumb { appearance: none; width: 8px; height: 12px; background: transparent; }

/* Desktop overlays */
.meter { position: absolute; right: 0; bottom: 128px; width: 10px; height: 59px; border: 1px solid #3a3e48; border-right: 0; border-radius: 3px 0 0 3px; background: repeating-linear-gradient(transparent 0 1px, #555a66 1px 2px) 3px 6px / 4px 46px no-repeat, linear-gradient(#3a3e4a 25%, #eac35b 27%, #d9e07a 50%, #69d9d0) 3px 6px / 4px 46px no-repeat, #555a66; }
.overlay-brand { position: absolute; right: 1px; bottom: 0; width: 159px; height: 50px; }
.ime { position: absolute; right: 0; bottom: 1px; width: 130px; height: 25px; padding-left: 14px; display: flex; align-items: center; gap: 9px; background: #fff; border: 1px solid #a9c8ea; }
.ime-cn { font-size: 15px; font-weight: 700; color: #0a6fdc; }
.brand-logo { position: absolute; left: 0; bottom: 0; }
.brand-name { position: absolute; left: 43px; top: 0; font: 700 21px/24px "Noto Sans CJK SC", sans-serif; color: #5f9ddcdd; white-space: nowrap; }
.brand-url { position: absolute; left: 43px; top: 24px; font: 700 16px/20px "Liberation Sans", sans-serif; color: #3cb371bb; }
```
